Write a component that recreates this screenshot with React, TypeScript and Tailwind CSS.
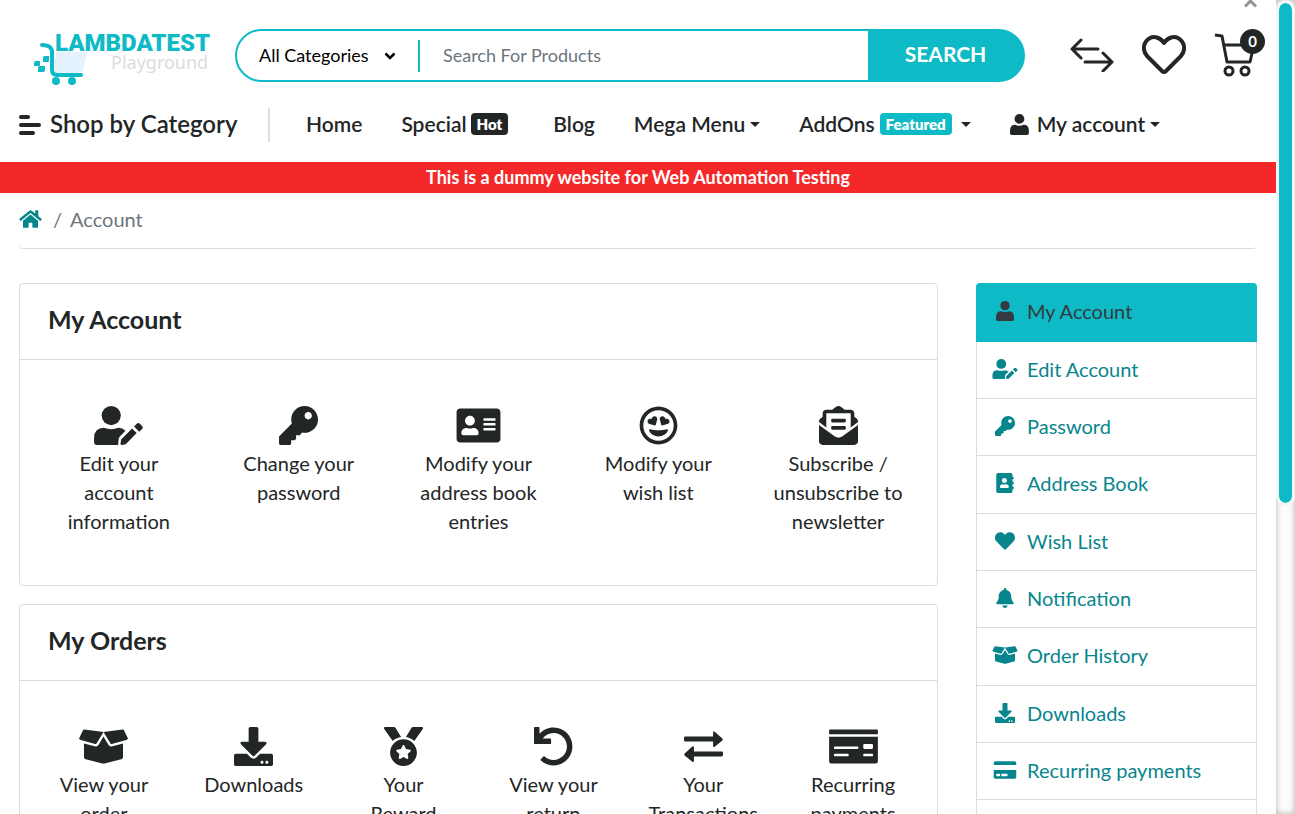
import type { ComponentType, ReactNode } from "react";
import {
  FaAddressBook,
  FaAddressCard,
  FaBell,
  FaBoxOpen,
  FaCreditCard,
  FaDownload,
  FaEnvelopeOpenText,
  FaHeart,
  FaHome,
  FaKey,
  FaMedal,
  FaMoneyCheck,
  FaRegGrinHearts,
  FaUndo,
} from "react-icons/fa";

type IconType = ComponentType<{ className?: string }>;

const UserIcon: IconType = ({ className }) => (
  <svg className={className} viewBox="0 0 54 60" height="1em" fill="currentColor" aria-hidden="true">
    <circle cx="27" cy="14" r="14" />
    <path d="M15 31q12 5 24 0q15 0 15 17v7q0 5-5 5H5q-5 0-5-5v-7q0-17 15-17z" />
  </svg>
);

const UserEditIcon: IconType = ({ className }) => (
  <svg className={className} viewBox="0 0 148 118" height="1em" fill="currentColor" aria-hidden="true">
    <circle cx="52" cy="29" r="29" />
    <path d="M30 66q22 8 44 0q12 0 21 9L78 92q-4 4-4 12l-1 14H9q-9 0-9-9v-11q0-32 30-32z" />
    <path d="M115 68l14 14l-33 34l-12 2q-4 0-4-4l2-13zM121 62l9-9q4-3 8 0l8 8q3 4 0 8l-9 9z" />
  </svg>
);

const ExchangeIcon: IconType = ({ className }) => (
  <svg className={className} viewBox="0 0 118 118" height="1em" fill="currentColor" aria-hidden="true">
    <path d="M4 29H88V17q0-6 5-3l23 21q3 3 0 6L93 60q-5 3-5-3V44H4q-4 0-4-4V33q0-4 4-4z" />
    <path d="M114 74H30V62q0-6-5-3L2 80q-3 3 0 6l23 19q5 3 5-3V89h84q4 0 4-4v-7q0-4-4-4z" />
  </svg>
);

const Caret = ({ className = "" }: { className?: string }) => (
  <svg className={`w-[10px] h-[5px] ${className}`} viewBox="0 0 10 5" fill="currentColor" aria-hidden="true">
    <path d="M0 0h10L5 5z" />
  </svg>
);

const Logo = () => (
  <a href="#home" aria-label="LambdaTest Playground" className="mt-[7px] shrink-0">
    <svg className="w-[176px] h-[54px]" viewBox="0 0 176 54" aria-hidden="true">
      <path d="M22 20H52q1 0 1 1L49 38q-1 3-4 3H20z" fill="#e3f2fc" />
      <path d="M8 13q11 0 10 9V38q0 5 5 5H47" fill="none" stroke="#0ebac5" strokeWidth="4" strokeLinecap="round" />
      <g fill="#0ebac5">
        <circle cx="22" cy="49" r="4" />
        <circle cx="38" cy="49" r="4" />
        <path d="M11 24h4v5q0 1-1 1H9v-4q0-2 2-2zM2 29h4v4q0 1-1 1H0v-3q0-2 2-2zM6 34h5v4q0 2-2 2H4v-4q0-2 2-2z" />
        <text x="21" y="19" fontSize="24" fontWeight="900" className="font-[Roboto]">
          LAMBDATEST
        </text>
      </g>
      <text x="77" y="37" fontSize="18" fill="#dcdcdc" className="font-['Noto_Sans']">
        Playground
      </text>
    </svg>
  </a>
);

const HeaderIcons = () => (
  <div className="flex shrink-0 items-center gap-7 pb-[2px] text-[#232627]">
    <a href="#compare" aria-label="Compare">
      <svg className="h-[34px] w-[44px]" viewBox="0 0 44 34" fill="none" stroke="currentColor" strokeWidth="3" strokeLinecap="round" strokeLinejoin="round">
        <path d="M28 11H2M11 2L2 11L11 20M15 24H42M33 15L42 24L33 33" />
      </svg>
    </a>
    <a href="#wishlist" aria-label="Wish list">
      <svg className="h-[40px] w-[44px]" viewBox="0 0 44 40" fill="none" stroke="currentColor" strokeWidth="4" strokeLinejoin="round">
        <path d="M22 8C18 2 12 1 8 3C1 7 0 15 5 21L20 36q2 2 4 0L39 21C44 15 43 7 36 3C32 1 26 2 22 8z" />
      </svg>
    </a>
    <a href="#cart" aria-label="Cart, 0 items" className="relative pr-[9px]">
      <svg className="h-[44px] w-[42px]" viewBox="0 0 42 44" fill="none" stroke="currentColor" strokeWidth="3" strokeLinejoin="round">
        <path d="M1 2L8 3L13 29H36L40 12H10" />
        <circle cx="15" cy="38" r="4" />
        <circle cx="31" cy="38" r="4" />
      </svg>
      <span className="absolute right-0 -top-[4px] flex size-[25px] items-center justify-center rounded-full bg-[#232627] text-[15px] font-bold text-white">
        0
      </span>
    </a>
  </div>
);

const Badge = ({ children, className }: { children: ReactNode; className: string }) => (
  <span className={`rounded-[4px] px-[6px] text-[15px] leading-[22px] font-extrabold text-white ${className}`}>{children}</span>
);

const accountItems: { icon: IconType; label: string }[] = [
  { icon: UserEditIcon, label: "Edit your account information" },
  { icon: FaKey, label: "Change your password" },
  { icon: FaAddressCard, label: "Modify your address book entries" },
  { icon: FaRegGrinHearts, label: "Modify your wish list" },
  { icon: FaEnvelopeOpenText, label: "Subscribe / unsubscribe to newsletter" },
];

const orderItems: { icon: IconType; label: string }[] = [
  { icon: FaBoxOpen, label: "View your order history" },
  { icon: FaDownload, label: "Downloads" },
  { icon: FaMedal, label: "Your Reward Points" },
  { icon: FaUndo, label: "View your return requests" },
  { icon: ExchangeIcon, label: "Your Transactions" },
  { icon: FaMoneyCheck, label: "Recurring payments" },
];

const sideItems: { icon: IconType; label: string }[] = [
  { icon: UserEditIcon, label: "Edit Account" },
  { icon: FaKey, label: "Password" },
  { icon: FaAddressBook, label: "Address Book" },
  { icon: FaHeart, label: "Wish List" },
  { icon: FaBell, label: "Notification" },
  { icon: FaBoxOpen, label: "Order History" },
  { icon: FaDownload, label: "Downloads" },
  { icon: FaCreditCard, label: "Recurring payments" },
  { icon: FaMedal, label: "Reward Points" },
];

const Card = ({ title, items, columns }: { title: string; items: { icon: IconType; label: string }[]; columns: string }) => (
  <section className="rounded-[4px] border border-[#dcdcdc]">
    <h2 className="border-b border-[#dcdcdc] px-7 pt-[21px] pb-[25px] text-[25px] leading-[29px] font-bold">{title}</h2>
    <div className={`grid px-[9px] pt-[28px] pb-[31px] ${columns}`}>
      {items.map(({ icon: Icon, label }) => (
        <a key={label} href="#account" className="flex flex-col items-center px-5 py-[18px] text-center leading-[29px]">
          <Icon className="mb-1 h-[39px] w-[49px]" />
          {label}
        </a>
      ))}
    </div>
  </section>
);

export default function App() {
  return (
    <div className="flex h-screen overflow-hidden bg-white font-[Lato,sans-serif] text-[20px] text-[#232627]">
      <div className="relative min-w-0 flex-1 overflow-hidden">
        <svg className="absolute top-0 right-[19px] h-[8px] w-[13px]" viewBox="0 0 13 8" aria-hidden="true">
          <path d="M1 6.5L6.5 1L12 6.5" fill="none" stroke="#8f9698" strokeWidth="3" />
        </svg>

        <header>
          <div className="flex items-center pt-[25px] pr-[11px] pl-[34px]">
            <Logo />
            <form className="mr-[45px] ml-[25px] flex h-[53px] min-w-0 flex-1 items-center overflow-hidden rounded-full border-2 border-[#0ebac5] bg-[#0ebac5]">
              <div className="flex h-full min-w-0 flex-1 items-center bg-white text-[18px] text-black">
                <label className="relative flex h-[32px] w-[183px] shrink-0 items-center border-r-2 border-[#0ebac5]">
                  <select aria-label="Category" className="h-full w-full cursor-pointer appearance-none bg-transparent pl-[22px] outline-none">
                    <option>All Categories</option>
                    <option>Desktops</option>
                    <option>Laptops</option>
                  </select>
                  <svg className="pointer-events-none absolute right-[22px] h-[8px] w-[12px]" viewBox="0 0 12 8" aria-hidden="true">
                    <path d="M1.500 1.500L6 6L10.500 1.500" fill="none" stroke="black" strokeWidth="2.500" />
                  </svg>
                </label>
                <input
                  type="text"
                  aria-label="Search"
                  placeholder="Search For Products"
                  className="h-full min-w-0 flex-1 px-[23px] pb-[2px] outline-none placeholder:text-[#6c757d]"
                />
              </div>
              <button type="submit" className="w-[155px] self-stretch pb-[4px] text-[21px] font-bold text-white">
                SEARCH
              </button>
            </form>
            <HeaderIcons />
          </div>

          <nav className="mt-[21px] flex h-[36px] items-center pl-[19px] text-[21px] font-semibold whitespace-nowrap">
            <button type="button" className="flex w-[251px] items-center gap-[9px] border-r-2 border-[#dcdcdc] text-[24px] leading-[31px] font-semibold">
              <svg className="h-[20px] w-[22px]" viewBox="0 0 22 20" fill="none" stroke="currentColor" strokeWidth="4" strokeLinecap="round" aria-hidden="true">
                <path d="M2 2H9M2 10H20M2 18H14" />
              </svg>
              <span className="pb-[3px]">Shop by Category</span>
            </button>
            <div className="ml-[36px] flex items-center gap-[39px] pb-[2px]">
              <a href="#home">Home</a>
              <a href="#special" className="mr-[6px] flex items-center gap-1">
                Special <Badge className="bg-[#232627]">Hot</Badge>
              </a>
              <a href="#blog">Blog</a>
              <a href="#mega" className="flex items-center gap-[5px]">
                Mega Menu <Caret />
              </a>
              <a href="#addons" className="flex items-center gap-[5px]">
                AddOns <Badge className="bg-[#0ebac5]">Featured</Badge> <Caret className="ml-1" />
              </a>
              <a href="#account" className="flex items-center">
                <UserIcon className="mr-2" />
                My account <Caret className="ml-[5px]" />
              </a>
            </div>
          </nav>
        </header>

        <p className="mt-[19px] bg-[#f42828] text-center text-[18px] leading-[31px] font-bold text-white">
          This is a dummy website for Web Automation Testing
        </p>

        <main className="px-[19px]">
          <nav aria-label="Breadcrumb" className="flex h-[56px] items-center gap-2 rounded-[4px] border-b border-[#dcdcdc] pb-[3px] text-[#6c757d]">
            <a href="#home" aria-label="Home" className="mr-[3px] text-[#07858d]">
              <FaHome className="h-[20px] w-[23px]" />
            </a>
            <span>/</span>
            <span>Account</span>
          </nav>

          <div className="mt-[34px] flex items-start gap-[38px]">
            <div className="flex min-w-0 flex-1 flex-col gap-[18px]">
              <Card title="My Account" items={accountItems} columns="grid-cols-5" />
              <Card title="My Orders" items={orderItems} columns="grid-cols-6" />
            </div>
            <aside className="w-[281px] shrink-0 overflow-hidden rounded-[4px]">
              <a href="#account" className="flex h-[59px] items-center gap-[9px] bg-[#0ebac5] px-4 pb-[3px] text-[#343a40]">
                <span className="flex w-[26px] justify-center">
                  <UserIcon />
                </span>
                My Account
              </a>
              {sideItems.map(({ icon: Icon, label }) => (
                <a
                  key={label}
                  href="#account"
                  className="flex h-[57px] items-center gap-[9px] border-x border-b border-[#dcdcdc] px-[15px] pb-[3px] text-[#07858d] nth-[3n+1]:h-[58px]"
                >
                  <Icon className="h-[20px] w-[26px]" />
                  {label}
                </a>
              ))}
            </aside>
          </div>
        </main>
      </div>

      <div className="w-[19px] shrink-0 bg-[#fcfcfc] px-[3px] pt-[3px] shadow-[inset_0_0_6px_rgba(0,0,0,0.3)]" aria-hidden="true">
        <div className="h-[500px] rounded-full bg-[#0ebac5] outline-3 outline-[#f5f5f5]" />
      </div>
    </div>
  );
}
